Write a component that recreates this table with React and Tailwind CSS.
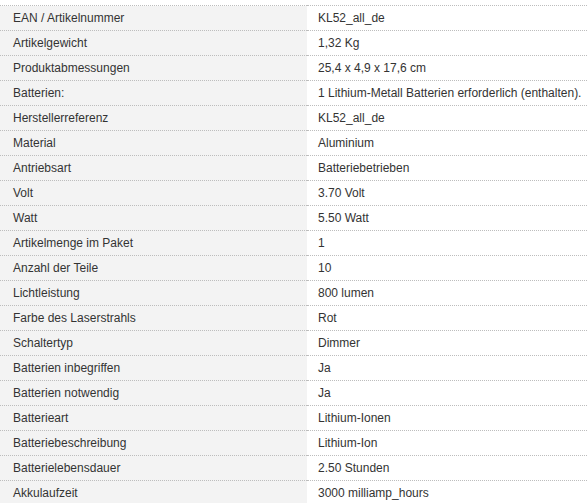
import React from "react";

const rows = [
  ["EAN / Artikelnummer", "KL52_all_de"],
  ["Artikelgewicht", "1,32 Kg"],
  ["Produktabmessungen", "25,4 x 4,9 x 17,6 cm"],
  ["Batterien:", "1 Lithium-Metall Batterien erforderlich (enthalten)."],
  ["Herstellerreferenz", "KL52_all_de"],
  ["Material", "Aluminium"],
  ["Antriebsart", "Batteriebetrieben"],
  ["Volt", "3.70 Volt"],
  ["Watt", "5.50 Watt"],
  ["Artikelmenge im Paket", "1"],
  ["Anzahl der Teile", "10"],
  ["Lichtleistung", "800 lumen"],
  ["Farbe des Laserstrahls", "Rot"],
  ["Schaltertyp", "Dimmer"],
  ["Batterien inbegriffen", "Ja"],
  ["Batterien notwendig", "Ja"],
  ["Batterieart", "Lithium-Ionen"],
  ["Batteriebeschreibung", "Lithium-Ion"],
  ["Batterielebensdauer", "2.50 Stunden"],
  ["Akkulaufzeit", "3000 milliamp_hours"],
];

export default function App() {
  return (
    <div className="h-[503px] w-[587px] overflow-hidden bg-white pt-[5px] font-['Liberation_Sans',Arial,sans-serif] text-[12px] text-[#333]">
      <table className="w-full border-collapse">
        <tbody>
          {rows.map(([label, value]) => (
            <tr key={label} className="h-[25px] border-t border-dotted border-[#bdbdbd]">
              <td className="w-[307px] bg-[#f3f3f3] pl-[13px] align-middle">{label}</td>
              <td className="pl-[11px] align-middle whitespace-nowrap">{value}</td>
            </tr>
          ))}
        </tbody>
      </table>
    </div>
  );
}
